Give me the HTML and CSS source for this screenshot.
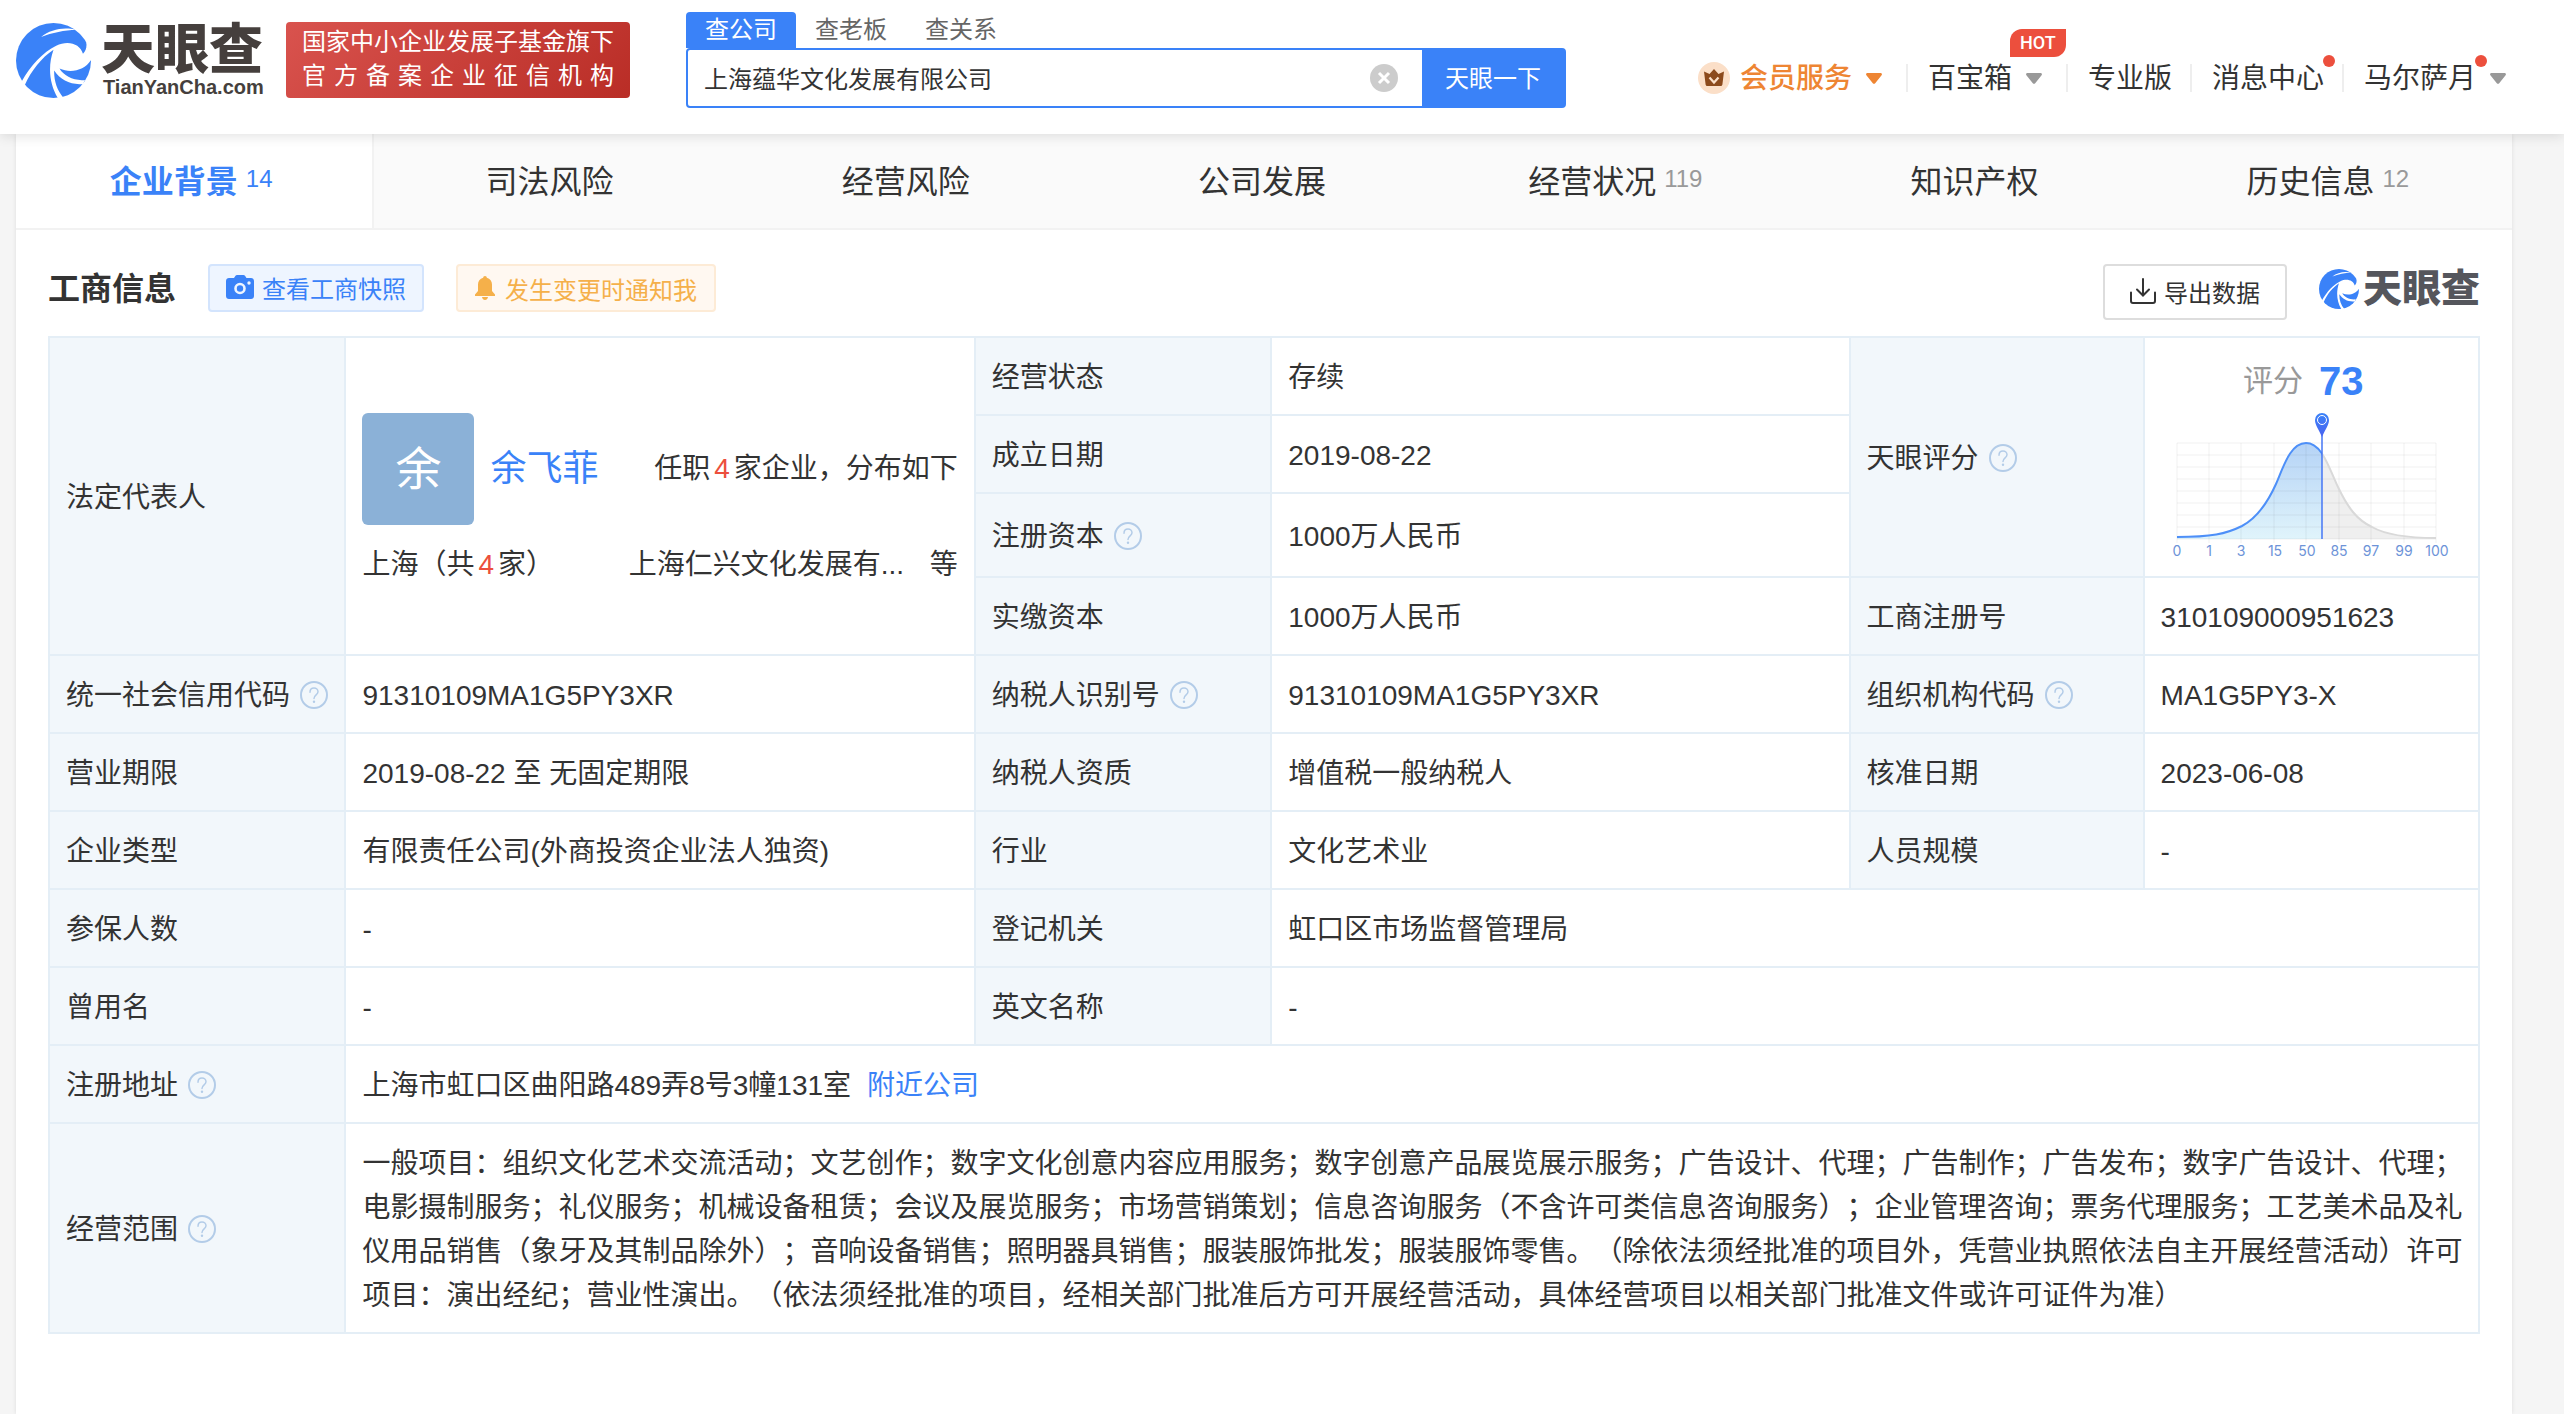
FILE: index.html
```html
<!DOCTYPE html>
<html lang="zh-CN">
<head>
    <meta charset="UTF-8">
    <meta name="viewport" content="width=device-width, initial-scale=1.0">
    <title>上海蕴华文化发展有限公司 - 天眼查</title>
    <link rel="stylesheet" href="styles.css">
</head>
<body>
    <!-- Shared icons -->
    <svg class="sprite" aria-hidden="true">
        <symbol id="icon-logo" viewBox="0 0 224 224">
            <circle cx="112" cy="112" r="112" fill="#3a82f8"/>
            <path fill="#fff" d="M75 42C103 19 145 11 180 21C145 21 108 29 75 42Z"/>
            <path fill="#fff" d="M16 176C45 125 80 88 120 68C155 50 192 62 200 92C208 84 212 74 210 58L236 58L236 112L223 112C205 140 165 152 130 136C142 158 175 174 206 170L200 182C165 186 132 170 114 142C113 172 122 200 142 224L126 226C100 184 94 130 112 80C76 104 46 142 26 186Z"/>
        </symbol>
        <symbol id="icon-help" viewBox="0 0 28 28">
            <circle cx="14" cy="14" r="13" fill="none" stroke="#b3cce8" stroke-width="2"/>
            <path d="M10 11.200C10 8.600 11.800 7 14 7s4 1.600 4 3.800c0 2.900-4 3.400-4 6.700" fill="none" stroke="#b3cce8" stroke-width="1.500" stroke-linecap="round"/>
            <circle cx="14" cy="20.800" r="1.200" fill="#b3cce8"/>
        </symbol>
        <symbol id="icon-caret" viewBox="0 0 16 11">
            <path d="M1.500 0h13c1.200 0 1.900 1.300 1.100 2.200L9.200 10.200c-.6.8-1.800.8-2.400 0L.4 2.200C-.4 1.300.3 0 1.500 0Z" fill="currentColor"/>
        </symbol>
    </svg>

    <header class="header">
        <a class="logo" href="#" aria-label="天眼查">
            <svg class="logo-mark"><use href="#icon-logo"/></svg>
            <span class="logo-text">
                <span class="logo-name">天眼查</span>
                <span class="logo-domain">TianYanCha.com</span>
            </span>
        </a>
        <div class="slogan">
            <span>国家中小企业发展子基金旗下</span>
            <span>官方备案企业征信机构</span>
        </div>

        <form class="search" onsubmit="return false">
            <div class="search-tabs">
                <button type="button" class="search-tab active">查公司</button>
                <button type="button" class="search-tab">查老板</button>
                <button type="button" class="search-tab">查关系</button>
            </div>
            <div class="search-box">
                <input type="text" id="searchInput" class="search-input" value="上海蕴华文化发展有限公司" aria-label="搜索公司">
                <button type="button" class="search-clear" aria-label="清空">
                    <svg viewBox="0 0 28 28"><circle cx="14" cy="14" r="14" fill="#ccc"/><path d="M9 9l10 10M19 9L9 19" stroke="#fff" stroke-width="3"/></svg>
                </button>
                <button type="submit" class="search-submit">天眼一下</button>
            </div>
        </form>

        <nav class="user-nav">
            <a class="nav-item vip" href="#">
                <svg class="crown" viewBox="0 0 32 32">
                    <circle cx="16" cy="16" r="16" fill="#fbdfc8"/>
                    <path d="M6 9.500l5.500 2.500L16 7l4.500 5L26 9.500l-1.600 13c-.1.900-.8 1.500-1.600 1.500H9.200c-.8 0-1.500-.6-1.600-1.500Z" fill="#8c4a1c"/>
                    <path d="M11.500 15.500L16 20.500l4.500-5" fill="none" stroke="#fbdfc8" stroke-width="2.200"/>
                </svg>
                <span class="nav-label">会员服务</span>
                <svg class="caret"><use href="#icon-caret"/></svg>
            </a>
            <a class="nav-item" href="#">
                <span class="nav-label">百宝箱<em class="hot">HOT</em></span>
                <svg class="caret"><use href="#icon-caret"/></svg>
            </a>
            <a class="nav-item" href="#"><span class="nav-label">专业版</span></a>
            <a class="nav-item" href="#"><span class="nav-label">消息中心<i class="dot"></i></span></a>
            <a class="nav-item" href="#">
                <span class="nav-label">马尔萨月<i class="dot"></i></span>
                <svg class="caret"><use href="#icon-caret"/></svg>
            </a>
        </nav>
    </header>

    <main class="container">
        <nav class="tabs">
            <a class="tab active" href="#">企业背景<span class="count">14</span></a>
            <a class="tab" href="#">司法风险</a>
            <a class="tab" href="#">经营风险</a>
            <a class="tab" href="#">公司发展</a>
            <a class="tab" href="#">经营状况<span class="count">119</span></a>
            <a class="tab" href="#">知识产权</a>
            <a class="tab" href="#">历史信息<span class="count">12</span></a>
        </nav>

        <section class="section">
            <div class="section-head">
                <h2 class="section-title">工商信息</h2>
                <button type="button" class="btn btn-snapshot">
                    <svg class="icon-camera" viewBox="0 0 28 24">
                        <path fill="#3a82f8" d="M3 3h5l1.500-2.200C9.900.3 10.400 0 11 0h6.500c.6 0 1.100.3 1.500.8L20.500 3H25c1.700 0 3 1.300 3 3v15c0 1.700-1.300 3-3 3H3c-1.700 0-3-1.300-3-3V6c0-1.700 1.300-3 3-3Z"/>
                        <circle cx="14" cy="13.500" r="4.500" fill="none" stroke="#eef5ff" stroke-width="2.600"/>
                        <circle cx="23" cy="8" r="1.700" fill="#eef5ff"/>
                    </svg>
                    查看工商快照
                </button>
                <button type="button" class="btn btn-notify">
                    <svg class="icon-bell" viewBox="0 0 20 24">
                        <path fill="#f5b04a" d="M10 0c1.100 0 1.800.8 1.800 1.800C15.200 2.600 17 5.400 17 8.500V15l3 3.500V20H0v-1.500L3 15V8.500c0-3.100 1.800-5.900 5.200-6.700C8.200.8 8.900 0 10 0ZM7 21h6c-.3 1.700-1.500 3-3 3s-2.700-1.300-3-3Z"/>
                    </svg>
                    发生变更时通知我
                </button>
                <button type="button" class="btn btn-export">
                    <svg class="icon-export" viewBox="0 0 26 26" fill="none" stroke="#333" stroke-width="2">
                        <path d="M13 1v16M7 11.500l6 6 6-6M1 14.500V23c0 1 .8 2 2 2h20c1.200 0 2-1 2-2v-8.500" stroke-linecap="round"/>
                    </svg>
                    导出数据
                </button>
                <div class="brand">
                    <svg class="brand-mark"><use href="#icon-logo"/></svg>
                    <span>天眼查</span>
                </div>
            </div>

            <table class="info">
                <colgroup>
                    <col class="col-a"><col class="col-b"><col class="col-a"><col class="col-c"><col class="col-d"><col>
                </colgroup>
                <tbody>
                    <tr>
                        <th rowspan="4" scope="row">法定代表人</th>
                        <td rowspan="4">
                            <div class="person">
                                <span class="avatar">余</span>
                                <a class="person-name" href="#">余飞菲</a>
                                <span class="person-jobs">任职<b>4</b>家企业，分布如下</span>
                            </div>
                            <div class="region">
                                <span>上海（共<b>4</b>家）</span>
                                <span class="region-company">上海仁兴文化发展有... <span>等</span></span>
                            </div>
                        </td>
                        <th scope="row">经营状态</th>
                        <td>存续</td>
                        <th rowspan="3" scope="row">天眼评分<svg class="help"><use href="#icon-help"/></svg></th>
                        <td rowspan="3" class="score-cell">
                            <div class="score">评分<strong>73</strong></div>
                            <svg class="chart" viewBox="0 0 290 152" role="img" aria-label="评分分布">
                                <defs>
                                    <linearGradient id="scoreFill" x1="0" y1="0" x2="0" y2="1">
                                        <stop offset="0" stop-color="#b5d3f6"/>
                                        <stop offset="1" stop-color="#e0f4fb"/>
                                    </linearGradient>
                                    <linearGradient id="pinFill" x1="0" y1="0" x2="0" y2="1">
                                        <stop offset="0" stop-color="#3a82f8"/>
                                        <stop offset="1" stop-color="#4a63f0"/>
                                    </linearGradient>
                                    <clipPath id="scored"><rect x="0" y="20" width="156" height="118"/></clipPath>
                                    <clipPath id="rest"><rect x="156" y="20" width="134" height="118"/></clipPath>
                                </defs>
                                <path clip-path="url(#scored)" fill="url(#scoreFill)" d="M11 128C45 128 60 125 76 117C91 109 101 95 110 75C117 59 124 34 140 34C156 34 163 59 172 78V130H11Z"/>
                                <path clip-path="url(#rest)" fill="#efefef" d="M140 34C156 34 163 59 172 78C182 99 191 111 206 118C220 126 240 129 270 129V130H140Z"/>
                                <path class="grid" d="M11 34H270M11 46H270M11 58H270M11 70H270M11 82H270M11 94H270M11 106H270M11 118H270M11 130H270M11 34V134M43 34V134M75 34V134M108 34V134M140 34V134M173 34V134M205 34V134M238 34V134M270 34V134"/>
                                <g fill="none" stroke-width="2">
                                    <path clip-path="url(#scored)" stroke="#4d8ff8" d="M11 128C45 128 60 125 76 117C91 109 101 95 110 75C117 59 124 34 140 34C156 34 163 59 172 78"/>
                                    <path clip-path="url(#rest)" stroke="#d9d9d9" d="M140 34C156 34 163 59 172 78C182 99 191 111 206 118C220 126 240 129 270 129"/>
                                </g>
                                <path d="M156 26V130" stroke="#4576f5" stroke-width="1.500"/>
                                <path fill="url(#pinFill)" d="M156 4a7 7 0 0 1 7 7c0 5-4 10-7 17c-3-7-7-12-7-17a7 7 0 0 1 7-7Z"/>
                                <circle cx="156" cy="11" r="4.500" fill="none" stroke="#fff" stroke-width="1"/>
                                <g class="ticks">
                                    <text x="11" y="147">0</text>
                                    <text x="43" y="147">1</text>
                                    <text x="75" y="147">3</text>
                                    <text x="109" y="147">15</text>
                                    <text x="141" y="147">50</text>
                                    <text x="173" y="147">85</text>
                                    <text x="205" y="147">97</text>
                                    <text x="238" y="147">99</text>
                                    <text x="271" y="147">100</text>
                                </g>
                            </svg>
                        </td>
                    </tr>
                    <tr>
                        <th scope="row">成立日期</th>
                        <td>2019-08-22</td>
                    </tr>
                    <tr class="tall">
                        <th scope="row">注册资本<svg class="help"><use href="#icon-help"/></svg></th>
                        <td>1000万人民币</td>
                    </tr>
                    <tr>
                        <th scope="row">实缴资本</th>
                        <td>1000万人民币</td>
                        <th scope="row">工商注册号</th>
                        <td>310109000951623</td>
                    </tr>
                    <tr>
                        <th scope="row">统一社会信用代码<svg class="help"><use href="#icon-help"/></svg></th>
                        <td>91310109MA1G5PY3XR</td>
                        <th scope="row">纳税人识别号<svg class="help"><use href="#icon-help"/></svg></th>
                        <td>91310109MA1G5PY3XR</td>
                        <th scope="row">组织机构代码<svg class="help"><use href="#icon-help"/></svg></th>
                        <td>MA1G5PY3-X</td>
                    </tr>
                    <tr>
                        <th scope="row">营业期限</th>
                        <td>2019-08-22 至 无固定期限</td>
                        <th scope="row">纳税人资质</th>
                        <td>增值税一般纳税人</td>
                        <th scope="row">核准日期</th>
                        <td>2023-06-08</td>
                    </tr>
                    <tr>
                        <th scope="row">企业类型</th>
                        <td>有限责任公司(外商投资企业法人独资)</td>
                        <th scope="row">行业</th>
                        <td>文化艺术业</td>
                        <th scope="row">人员规模</th>
                        <td>-</td>
                    </tr>
                    <tr>
                        <th scope="row">参保人数</th>
                        <td>-</td>
                        <th scope="row">登记机关</th>
                        <td colspan="3">虹口区市场监督管理局</td>
                    </tr>
                    <tr>
                        <th scope="row">曾用名</th>
                        <td>-</td>
                        <th scope="row">英文名称</th>
                        <td colspan="3">-</td>
                    </tr>
                    <tr>
                        <th scope="row">注册地址<svg class="help"><use href="#icon-help"/></svg></th>
                        <td colspan="5">上海市虹口区曲阳路489弄8号3幢131室<a class="nearby" href="#">附近公司</a></td>
                    </tr>
                    <tr>
                        <th scope="row">经营范围<svg class="help"><use href="#icon-help"/></svg></th>
                        <td colspan="5">一般项目：组织文化艺术交流活动；文艺创作；数字文化创意内容应用服务；数字创意产品展览展示服务；广告设计、代理；广告制作；广告发布；数字广告设计、代理；电影摄制服务；礼仪服务；机械设备租赁；会议及展览服务；市场营销策划；信息咨询服务（不含许可类信息咨询服务）；企业管理咨询；票务代理服务；工艺美术品及礼仪用品销售（象牙及其制品除外）；音响设备销售；照明器具销售；服装服饰批发；服装服饰零售。（除依法须经批准的项目外，凭营业执照依法自主开展经营活动）许可项目：演出经纪；营业性演出。（依法须经批准的项目，经相关部门批准后方可开展经营活动，具体经营项目以相关部门批准文件或许可证件为准）</td>
                    </tr>
                </tbody>
            </table>
        </section>
    </main>
</body>
</html>
```

FILE: styles.css
```css
* {
    box-sizing: border-box;
}

body {
    margin: 0;
    min-height: 100vh;
    display: flex;
    flex-direction: column;
    background-color: #f5f5f5;
    color: #333;
    font-family: "Liberation Sans", "Noto Sans CJK SC", sans-serif;
    font-size: 28px;
    text-spacing-trim: space-all;
}

a {
    color: inherit;
    text-decoration: none;
}

button {
    font-family: inherit;
    cursor: pointer;
}

.sprite {
    position: absolute;
    width: 0;
    height: 0;
}

/* Header */
.header {
    position: relative;
    z-index: 1;
    display: flex;
    align-items: center;
    padding: 12px 58px 26px 16px;
    background-color: #fff;
    box-shadow: 0 2px 12px rgba(0, 0, 0, 0.12);
}

.logo {
    display: flex;
    align-items: center;
    gap: 10px;
    width: 270px;
    color: #453f3d;
    font-weight: bold;
}

.logo-mark {
    flex: none;
    width: 75px;
    height: 75px;
}

.logo-text {
    display: flex;
    flex-direction: column;
}

.logo-name {
    font-size: 54px;
    line-height: 54px;
    font-weight: 900;
}

.logo-domain {
    padding-left: 2px;
    font-size: 20px;
    line-height: 20px;
}

.slogan {
    display: flex;
    flex-direction: column;
    justify-content: center;
    width: 344px;
    height: 76px;
    padding: 0 16px 2px;
    border-radius: 4px;
    background: linear-gradient(135deg, #d9534e, #b92d26);
    color: #fff;
    font-size: 24px;
    line-height: 34px;
}

.slogan span {
    text-align-last: justify;
    white-space: nowrap;
}

.search {
    width: 880px;
    margin-left: 56px;
}

.search-tabs {
    display: flex;
}

.search-tab {
    height: 36px;
    padding: 0 19px;
    border: none;
    border-radius: 4px 4px 0 0;
    background: none;
    color: #666;
    font-size: 24px;
    line-height: 36px;
}

.search-tab.active {
    background-color: #3a82f8;
    color: #fff;
}

.search-box {
    display: flex;
    align-items: center;
    height: 60px;
    border: 2px solid #3a82f8;
    border-radius: 4px;
}

.search-input {
    flex: 1;
    min-width: 0;
    height: 56px;
    padding: 0 16px 2px;
    border: none;
    outline: none;
    background: none;
    color: #333;
    font-family: inherit;
    font-size: 24px;
}

.search-clear {
    width: 28px;
    height: 28px;
    margin-right: 24px;
    padding: 0;
    border: none;
    background: none;
}

.search-clear svg {
    display: block;
}

.search-submit {
    width: 142px;
    height: 56px;
    padding: 0 0 4px;
    border: none;
    background-color: #3a82f8;
    color: #fff;
    font-size: 24px;
}

.user-nav {
    display: flex;
    align-self: flex-end;
    align-items: center;
    height: 60px;
    margin-left: auto;
}

.nav-item {
    display: flex;
    align-items: center;
    height: 28px;
    padding: 0 18px 0 20px;
    border-right: 2px solid #eee;
}

.nav-item:last-child {
    padding-right: 0;
    border-right: none;
}

.nav-label {
    position: relative;
    padding-top: 2px;
    line-height: 40px;
    white-space: nowrap;
}

.caret {
    width: 16px;
    height: 11px;
    margin: 0 6px 0 14px;
    color: #999;
}

.nav-item:last-child .caret {
    margin-right: 0;
}

.vip,
.vip .caret {
    color: #ee8533;
    font-weight: 500;
}

.crown {
    width: 32px;
    height: 32px;
    margin-right: 10px;
}

.hot {
    position: absolute;
    top: -28px;
    left: 82px;
    width: 56px;
    height: 28px;
    border-radius: 12px 0 12px 0;
    background-color: #ec4f3d;
    color: #fff;
    font-family: Roboto, sans-serif;
    font-size: 18px;
    font-style: normal;
    font-weight: 500;
    line-height: 28px;
    text-align: center;
}

.dot {
    position: absolute;
    top: -2px;
    right: -11px;
    width: 12px;
    height: 12px;
    border-radius: 50%;
    background-color: #ec4f3d;
}

/* Page body */
.container {
    flex: 1;
    margin: 0 52px 0 16px;
    background-color: #fff;
    box-shadow: 0 0 4px rgba(0, 0, 0, 0.1);
}

.tabs {
    display: flex;
    border-bottom: 2px solid #f2f2f2;
    background-color: #fafafa;
}

.tab {
    flex: 1;
    display: flex;
    justify-content: center;
    align-items: center;
    gap: 8px;
    height: 94px;
    padding: 0 6px 4px 0;
    font-size: 32px;
}

.tab.active {
    border-right: 2px solid #f2f2f2;
    background-color: #fff;
    color: #3a82f8;
    font-weight: bold;
}

.count {
    margin-right: 6px;
    color: #999;
    font-size: 24px;
    font-weight: normal;
}

.tab.active .count {
    margin-right: 0;
    color: #3a82f8;
}

.section {
    padding: 34px 32px 80px;
}

.section-head {
    display: flex;
    align-items: flex-start;
    height: 72px;
}

.section-title {
    margin: 0 32px 0 0;
    font-size: 32px;
    line-height: 50px;
}

.btn {
    display: flex;
    justify-content: center;
    align-items: center;
    gap: 8px;
    height: 48px;
    padding: 0 16px 2px;
    border: 2px solid;
    border-radius: 4px;
    font-size: 24px;
    white-space: nowrap;
}

.btn-snapshot {
    margin-right: 32px;
    border-color: #d3e4fd;
    background-color: #eef5ff;
    color: #3a82f8;
}

.btn-notify {
    gap: 10px;
    padding: 0 17px;
    border-color: #fdebd6;
    background-color: #fff8f1;
    color: #f5b04a;
}

.btn-export {
    width: 184px;
    height: 56px;
    margin-left: auto;
    border-color: #ddd;
    background-color: #fff;
    color: #333;
}

.icon-camera {
    width: 28px;
    height: 24px;
}

.icon-bell {
    width: 20px;
    height: 24px;
}

.icon-export {
    width: 26px;
    height: 26px;
}

.brand {
    display: flex;
    align-items: center;
    gap: 4px;
    height: 50px;
    margin-left: 32px;
    color: #55565c;
    font-size: 39px;
    font-weight: 900;
    line-height: 48px;
}

.brand-mark {
    width: 40px;
    height: 40px;
}

/* Info table */
.info {
    width: 100%;
    border-collapse: collapse;
    table-layout: fixed;
}

.col-a {
    width: 12.2%;
}

.col-b {
    width: 25.9%;
}

.col-c {
    width: 23.8%;
}

.col-d {
    width: 12.1%;
}

.info th,
.info td {
    padding: 18px 14px 14px 16px;
    border: 2px solid #e4eef6;
    line-height: 44px;
    text-align: left;
    vertical-align: middle;
}

.info th {
    background-color: #f2f7fb;
    font-weight: normal;
    white-space: nowrap;
}

.info .tall {
    height: 84px;
}

.info b {
    margin: 0 4px;
    color: #ec4f3d;
    font-weight: normal;
}

.help {
    width: 28px;
    height: 28px;
    margin-left: 10px;
    vertical-align: -4px;
}

.person {
    display: flex;
    align-items: center;
    padding-right: 2px;
}

.avatar {
    width: 112px;
    height: 112px;
    border-radius: 6px;
    background-color: #8bb1d7;
    color: #fff;
    font-size: 46px;
    line-height: 112px;
    text-align: center;
}

.person-name {
    margin-left: 16px;
    color: #3a82f8;
    font-size: 36px;
}

.person-jobs {
    margin-left: auto;
}

.region {
    display: flex;
    justify-content: space-between;
    margin-top: 22px;
    padding-right: 2px;
    line-height: 36px;
}

.region-company span {
    margin-left: 18px;
}

.nearby {
    margin-left: 16px;
    color: #3a82f8;
}

.info .score-cell {
    padding: 4px 0 0;
    text-align: center;
}

.score {
    display: flex;
    justify-content: center;
    align-items: center;
    gap: 16px;
    margin-right: 16px;
    color: #999;
    font-size: 30px;
    line-height: 48px;
}

.score strong {
    color: #3a82f8;
    font-size: 40px;
}

.chart {
    display: block;
    width: 290px;
    height: 152px;
    margin: 4px auto 0;
}

.grid {
    fill: none;
    stroke: #000;
    stroke-opacity: 0.06;
}

.ticks {
    fill: #6d93d8;
    font-family: Inter, sans-serif;
    font-size: 14px;
    text-anchor: middle;
}
```
